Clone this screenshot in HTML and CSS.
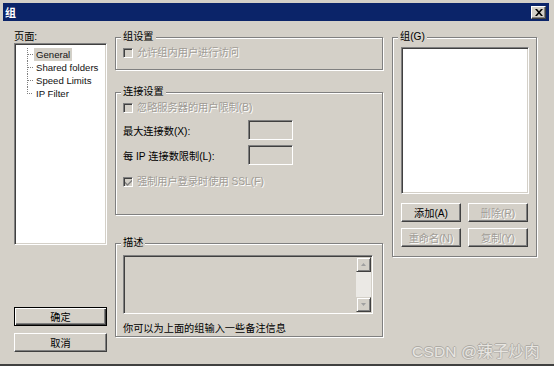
FILE: index.html
```html
<!DOCTYPE html>
<html lang="zh-CN">

<head>
    <meta charset="UTF-8" />
    <meta name="viewport" content="width=device-width, initial-scale=1.0" />
    <title>组</title>
    <link rel="stylesheet" href="styles.css">
</head>

<body>
    <div class="window">
        <div class="titlebar">
            <span class="title">组</span>
            <span class="close-btn">
                <svg width="8" height="7" viewBox="0 0 8 7">
                    <path d="M0 0h2l2 2.2L6 0h2L5 3.5 8 7H6L4 4.8 2 7H0l3-3.5z" fill="#000" />
                </svg>
            </span>
        </div>

        <div class="dialog">
            <!-- left: page tree + ok / cancel -->
            <div class="col-left">
                <div class="label">页面:</div>
                <div class="listbox tree">
                    <ul>
                        <li><span class="selected">General</span></li>
                        <li>Shared folders</li>
                        <li>Speed Limits</li>
                        <li>IP Filter</li>
                    </ul>
                </div>
                <div class="left-buttons">
                    <button class="btn default">确定</button>
                    <button class="btn">取消</button>
                </div>
            </div>

            <!-- middle: settings -->
            <div class="col-mid">
                <div class="group group-settings">
                    <div class="group-title">组设置</div>
                    <div class="check disabled"><span class="box"></span>允许组内用户进行访问</div>
                </div>

                <div class="group group-conn">
                    <div class="group-title">连接设置</div>
                    <div class="check disabled"><span class="box"></span>忽略服务器的用户限制(B)</div>
                    <div class="field first">
                        <span class="field-label">最大连接数(X):</span>
                        <span class="input"></span>
                    </div>
                    <div class="field">
                        <span class="field-label">每 IP 连接数限制(L):</span>
                        <span class="input"></span>
                    </div>
                    <div class="check disabled ssl">
                        <span class="box checked">
                            <svg width="7" height="7" viewBox="0 0 7 7">
                                <path d="M0 2.5l2.5 2.5L7 0.5v2L2.5 7 0 4.5z" fill="#808080" />
                            </svg>
                        </span>强制用户登录时使用 SSL(F)
                    </div>
                </div>

                <div class="group group-desc">
                    <div class="group-title">描述</div>
                    <div class="textarea">
                        <div class="text-area-body"></div>
                        <div class="scrollbar">
                            <span class="scroll-btn">
                                <svg width="5" height="3" viewBox="0 0 5 3"><path d="M2.5 0L5 3H0z" fill="#a0a0a0" /></svg>
                            </span>
                            <span class="scroll-track"></span>
                            <span class="scroll-btn">
                                <svg width="5" height="3" viewBox="0 0 5 3"><path d="M0 0h5L2.5 3z" fill="#a0a0a0" /></svg>
                            </span>
                        </div>
                    </div>
                    <div class="hint">你可以为上面的组输入一些备注信息</div>
                </div>
            </div>

            <!-- right: group list -->
            <div class="col-right">
                <div class="group group-list">
                    <div class="group-title">组(G)</div>
                    <div class="listbox groups"></div>
                    <div class="btn-grid">
                        <button class="btn">添加(A)</button>
                        <button class="btn" disabled>删除(R)</button>
                        <button class="btn" disabled>重命名(N)</button>
                        <button class="btn" disabled>复制(Y)</button>
                    </div>
                </div>
            </div>
        </div>

        <div class="watermark">CSDN @辣子炒肉</div>
    </div>
</body>

</html>
```

FILE: styles.css
```css
* {
    box-sizing: border-box;
}

body {
    margin: 0;
    background: #fff;
    font-family: "Liberation Sans", "Noto Sans CJK SC", sans-serif;
    font-size: 10.2px;
    color: #000;
}

.window {
    position: relative;
    width: 554px;
    height: 366px;
    padding: 3px 5px 0 3px;
    background: #d4d0c8;
    border-bottom: 2px solid #404040;
}

.titlebar {
    height: 18px;
    background: #0b2469;
    display: flex;
    align-items: center;
    justify-content: space-between;
    padding: 0 3px 0 2px;
}

.title {
    color: #fff;
    font-weight: bold;
    font-size: 11px;
    font-family: "Noto Sans CJK SC", sans-serif;
}

.close-btn {
    width: 15px;
    height: 13px;
    background: #d4d0c8;
    border-top: 1px solid #fff;
    border-left: 1px solid #fff;
    border-right: 1px solid #404040;
    border-bottom: 1px solid #404040;
    box-shadow: inset -1px -1px 0 #808080;
    display: flex;
    align-items: center;
    justify-content: center;
}

.dialog {
    display: grid;
    grid-template-columns: 93px 268px 146px;
    column-gap: 8px;
    padding: 10px 0 0 11px;
}

.col-right {
    margin-left: 1px;
}

/* left column */
.label {
    height: 12px;
    line-height: 12px;
}

.listbox {
    background: #fff;
    border-top: 1px solid #808080;
    border-left: 1px solid #808080;
    border-right: 1px solid #fff;
    border-bottom: 1px solid #fff;
    box-shadow: inset 1px 1px 0 #404040, inset -1px -1px 0 #d4d0c8;
}

.tree {
    height: 202px;
    padding: 4px 0 0 12px;
}

.tree ul {
    list-style: none;
    margin: 0;
    padding: 0;
}

.tree li {
    position: relative;
    height: 13px;
    line-height: 13px;
    padding-left: 8px;
    border-left: 1px dotted #808080;
    font-size: 9.6px;
    color: #111;
    white-space: nowrap;
}

.tree li:last-child {
    border-left: none;
    padding-left: 9px;
}

.tree li::before {
    content: "";
    position: absolute;
    left: 0;
    top: 6px;
    width: 5px;
    border-top: 1px dotted #808080;
}

.tree li:last-child::after {
    content: "";
    position: absolute;
    left: 0;
    top: 0;
    height: 7px;
    border-left: 1px dotted #808080;
}

.tree .selected {
    background: #d4d0c8;
    padding: 1px 2px;
    margin-left: -2px;
}

.left-buttons {
    display: flex;
    flex-direction: column;
    gap: 7px;
    margin-top: 62px;
}

/* buttons */
.btn {
    height: 19px;
    padding: 0;
    font: inherit;
    color: #000;
    background: #d4d0c8;
    border-top: 1px solid #fff;
    border-left: 1px solid #fff;
    border-right: 1px solid #404040;
    border-bottom: 1px solid #404040;
    box-shadow: inset -1px -1px 0 #808080;
}

.btn.default {
    border: 1px solid #000;
    box-shadow: inset 1px 1px 0 #fff, inset -1px -1px 0 #404040, inset -2px -2px 0 #808080;
}

.btn:disabled {
    color: #a09c96;
    text-shadow: 1px 1px 0 #fff;
}

/* group boxes */
.group {
    position: relative;
    border: 1px solid #808080;
    box-shadow: inset 1px 1px 0 #fff, 1px 1px 0 #fff;
    padding: 9px 7px 0 7px;
}

.group-title {
    position: absolute;
    top: -7px;
    left: 5px;
    padding: 0 2px;
    height: 12px;
    line-height: 12px;
    background: #d4d0c8;
}

.group-settings {
    margin-top: 6px;
    height: 33px;
}

.group-conn {
    margin-top: 22px;
    height: 123px;
}

.group-desc {
    margin-top: 28px;
    height: 94px;
    padding-top: 11px;
}

.check {
    display: flex;
    align-items: center;
    height: 12px;
    line-height: 12px;
}

.check.disabled {
    color: #a09c96;
    text-shadow: 1px 1px 0 #fff;
}

.box {
    width: 10px;
    height: 10px;
    margin-right: 4px;
    background: #d4d0c8;
    border-top: 1px solid #808080;
    border-left: 1px solid #808080;
    border-right: 1px solid #fff;
    border-bottom: 1px solid #fff;
    box-shadow: inset 1px 1px 0 #404040;
    display: flex;
    align-items: center;
    justify-content: center;
    flex-shrink: 0;
}

.field {
    display: flex;
    align-items: center;
    height: 20px;
    margin-top: 5px;
}

.field.first {
    margin-top: 6px;
}

.field-label {
    width: 125px;
}

.input {
    width: 45px;
    height: 20px;
    border-top: 1px solid #808080;
    border-left: 1px solid #808080;
    border-right: 1px solid #fff;
    border-bottom: 1px solid #fff;
    box-shadow: inset 1px 1px 0 #404040, inset -1px -1px 0 #d4d0c8;
}

.check.ssl {
    margin-top: 11px;
}

/* description */
.textarea {
    display: flex;
    width: 250px;
    height: 59px;
    border-top: 1px solid #808080;
    border-left: 1px solid #808080;
    border-right: 1px solid #fff;
    border-bottom: 1px solid #fff;
    box-shadow: inset 1px 1px 0 #404040;
    padding: 1px;
}

.text-area-body {
    flex: 1;
}

.scrollbar {
    width: 15px;
    display: flex;
    flex-direction: column;
    background: #ebe9e5;
}

.scroll-track {
    flex: 1;
}

.scroll-btn {
    height: 15px;
    background: #d4d0c8;
    border-top: 1px solid #d4d0c8;
    border-left: 1px solid #d4d0c8;
    border-right: 1px solid #404040;
    border-bottom: 1px solid #404040;
    box-shadow: inset 1px 1px 0 #fff, inset -1px -1px 0 #808080;
    display: flex;
    align-items: center;
    justify-content: center;
}

.hint {
    margin-top: 9px;
    height: 12px;
    line-height: 12px;
}

/* group list */
.group-list {
    margin-top: 6px;
    height: 220px;
    padding: 9px 8px 0 8px;
}

.groups {
    width: 128px;
    height: 147px;
}

.btn-grid {
    display: grid;
    grid-template-columns: 60px 60px;
    column-gap: 7px;
    row-gap: 6px;
    margin-top: 9px;
}

.watermark {
    position: absolute;
    right: 14px;
    bottom: 3px;
    font-size: 15.5px;
    line-height: 18px;
    color: #e8e6e2;
    text-shadow: -1px 0 0 #aeaba5, 0 -1px 0 #aeaba5, 1px 0 0 #bcb9b3, 0 1px 0 #bcb9b3;
    letter-spacing: 0.2px;
}
```
